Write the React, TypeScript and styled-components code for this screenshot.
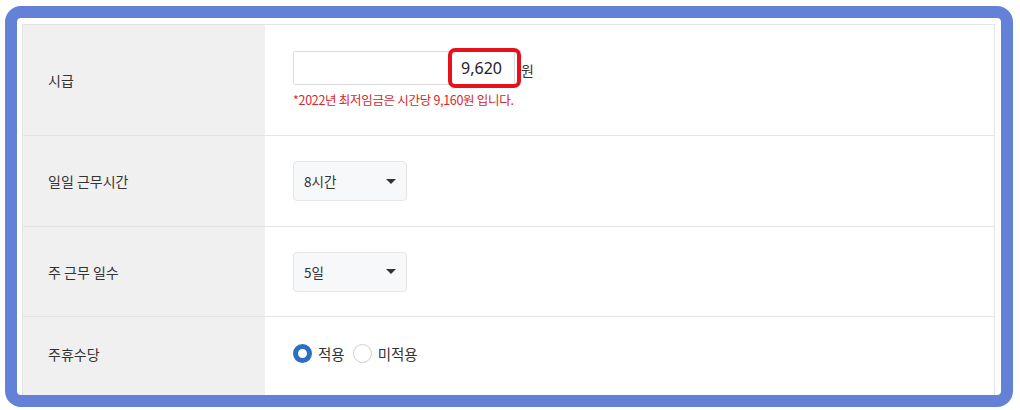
import styled, { createGlobalStyle } from "styled-components"

const GlobalStyle = createGlobalStyle`
  html, body {
    margin: 0;
    padding: 0;
    background: #ffffff;
    font-family: "Noto Sans CJK KR", "Noto Sans", sans-serif;
  }
`

const Page = styled.div`
  width: 1020px;
  height: 410px;
  padding: 6px 7px 3px 5px;
  box-sizing: border-box;
`

const Frame = styled.div`
  height: 401px;
  box-sizing: border-box;
  border: 12px solid #6382d7;
  border-radius: 16px;
  padding: 6px 6px 0 5px;
  overflow: hidden;
  background: #ffffff;
`

const Table = styled.div`
  border: 1px solid #e4e4e4;
  border-bottom: 0;
  display: flex;
  flex-direction: column;
`

const Row = styled.div<{ h: number; pb?: number }>`
  display: grid;
  grid-template-columns: 242px 1fr;
  height: ${props => props.h}px;
  box-sizing: border-box;
  flex-shrink: 0;
  & + & {
    border-top: 1px solid #e4e4e4;
  }
  & > * {
    padding-bottom: ${props => props.pb || 0}px;
  }
`

const Label = styled.div`
  background: #f0f0f0;
  display: flex;
  align-items: center;
  padding-left: 25px;
  font-size: 14px;
  color: #333333;
`

const Value = styled.div`
  display: flex;
  flex-direction: column;
  justify-content: center;
  padding-left: 28px;
  font-size: 14px;
  color: #333333;
`

const InputLine = styled.div`
  display: flex;
  align-items: center;
  position: relative;
  width: fit-content;
`

const TextBox = styled.div`
  width: 222px;
  height: 34px;
  box-sizing: border-box;
  border: 1px solid #dcdcdc;
  border-radius: 2px;
  display: flex;
  align-items: center;
  justify-content: flex-end;
  padding-right: 12px;
  font-family: "Noto Sans", sans-serif;
  font-size: 16px;
  color: #222222;
`

const Unit = styled.span`
  margin-left: 6px;
  font-size: 14px;
  color: #333333;
  padding-top: 4px;
`

const Highlight = styled.div`
  position: absolute;
  left: 155px;
  top: -3px;
  width: 73px;
  height: 40px;
  box-sizing: border-box;
  border: 4px solid #e8101a;
  border-radius: 7px;
`

const Note = styled.div`
  margin-top: 5px;
  font-size: 12.5px;
  color: #d8262e;
  letter-spacing: -0.3px;
`

const Select = styled.div`
  width: 114px;
  height: 40px;
  box-sizing: border-box;
  border: 1px solid #e6e6e6;
  border-radius: 4px;
  background: #f7f8fa;
  display: flex;
  align-items: center;
  justify-content: space-between;
  padding: 0 10px 0 10px;
  font-size: 13.5px;
  color: #333333;
`

const Caret = styled.span`
  width: 0;
  height: 0;
  border-left: 5px solid transparent;
  border-right: 5px solid transparent;
  border-top: 5px solid #333333;
`

const RadioGroup = styled.div`
  display: flex;
  align-items: center;
`

const RadioDot = styled.span<{ checked?: boolean }>`
  width: 19px;
  height: 19px;
  box-sizing: border-box;
  border-radius: 50%;
  background: #ffffff;
  border: ${props => props.checked ? "5px solid #2a6fc2" : "1px solid #cfcfcf"};
  margin-right: 6px;
`

const RadioLabel = styled.span`
  font-size: 14.5px;
  color: #333333;
  margin-right: 8px;
`

export default function App() {
  return <>
    <GlobalStyle />
    <Page>
      <Frame>
        <Table>
          <Row h={110}>
            <Label>시급</Label>
            <Value>
              <InputLine>
                <TextBox>9,620</TextBox>
                <Unit>원</Unit>
                <Highlight />
              </InputLine>
              <Note>*2022년 최저임금은 시간당 9,160원 입니다.</Note>
            </Value>
          </Row>
          <Row h={91}>
            <Label>일일 근무시간</Label>
            <Value>
              <Select>8시간<Caret /></Select>
            </Value>
          </Row>
          <Row h={90}>
            <Label>주 근무 일수</Label>
            <Value>
              <Select>5일<Caret /></Select>
            </Value>
          </Row>
          <Row h={82} pb={8}>
            <Label>주휴수당</Label>
            <Value>
              <RadioGroup>
                <RadioDot checked />
                <RadioLabel>적용</RadioLabel>
                <RadioDot />
                <RadioLabel>미적용</RadioLabel>
              </RadioGroup>
            </Value>
          </Row>
        </Table>
      </Frame>
    </Page>
  </>
}
